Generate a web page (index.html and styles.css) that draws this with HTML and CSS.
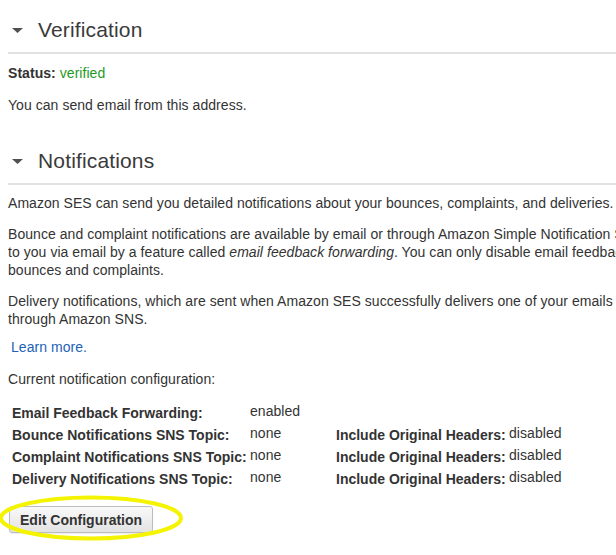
FILE: index.html
```html
<!DOCTYPE html>
<html>
<head>
<meta charset="utf-8">
<link rel="stylesheet" href="styles.css">
</head>
<body>
<div class="page">
  <div class="section-head">
    <svg class="caret" width="11" height="5" viewBox="0 0 11 5"><polygon points="0,0 11,0 5.5,5" fill="#505050"/></svg>
    <span class="section-title">Verification</span>
  </div>
  <p class="status"><b>Status:</b> <span class="ok">verified</span></p>
  <p class="p-send">You can send email from this address.</p>

  <div class="section-head section-head-2">
    <svg class="caret" width="11" height="5" viewBox="0 0 11 5"><polygon points="0,0 11,0 5.5,5" fill="#505050"/></svg>
    <span class="section-title">Notifications</span>
  </div>
  <p class="p-first">Amazon SES can send you detailed notifications about your bounces, complaints, and deliveries.</p>
  <p>Bounce and complaint notifications are available by email or through Amazon Simple Notification Service (Amazon SNS). By default, bounce and complaint notifications are sent<br>to you via email by a feature called <i>email feedback forwarding</i>. You can only disable email feedback forwarding when you have specified Amazon SNS topics for both<br>bounces and complaints.</p>
  <p>Delivery notifications, which are sent when Amazon SES successfully delivers one of your emails to a recipient's mail server, are only available<br>through Amazon SNS.</p>
  <p class="learn"><a href="#">Learn more.</a></p>
  <p class="current">Current notification configuration:</p>

  <div class="config">
    <div class="lbl">Email Feedback Forwarding:</div>
    <div class="val">enabled</div>
    <div></div>
    <div></div>

    <div class="lbl">Bounce Notifications SNS Topic:</div>
    <div class="val">none</div>
    <div class="lbl">Include Original Headers:</div>
    <div class="val">disabled</div>

    <div class="lbl">Complaint Notifications SNS Topic:</div>
    <div class="val">none</div>
    <div class="lbl">Include Original Headers:</div>
    <div class="val">disabled</div>

    <div class="lbl">Delivery Notifications SNS Topic:</div>
    <div class="val">none</div>
    <div class="lbl">Include Original Headers:</div>
    <div class="val">disabled</div>
  </div>

  <div class="btn-wrap">
    <button class="btn">Edit Configuration</button>
    <svg class="highlight" width="200" height="64" viewBox="0 0 200 64"><ellipse cx="91" cy="31" rx="90" ry="20.5" fill="none" stroke="#f4f400" stroke-width="4"/></svg>
  </div>
</div>
</body>
</html>
```

FILE: styles.css
```css
html {
  overflow: hidden;
  background: #fff;
}

body {
  margin: 0;
  padding: 0;
  font-family: "Liberation Sans", Arial, sans-serif;
  font-size: 14px;
  line-height: 18px;
  letter-spacing: 0.05px;
  color: #333;
}

.page {
  width: 1100px;
  padding: 0 8px 40px 8px;
}

p {
  margin: 13px 0 0 0;
  white-space: nowrap;
}

.section-head {
  display: flex;
  align-items: center;
  margin-top: 17px;
  padding: 0 0 9px 4px;
  border-bottom: 2px solid #e2e2e2;
}

.section-head-2 {
  margin-top: 34px;
}

.caret {
  display: block;
  margin-right: 15px;
  margin-top: 1px;
}

.section-title {
  font-size: 21px;
  line-height: 26px;
  letter-spacing: 0.15px;
  color: #3a3a3a;
}

.status {
  margin-top: 10px;
}

.status b {
  color: #333;
}

.ok {
  color: #1f9a1f;
}

.p-send {
  margin-top: 14px;
}

.p-first {
  margin-top: 9px;
}

.learn {
  margin-top: 10px;
  padding-left: 3px;
}

.learn a {
  color: #1c63b7;
  text-decoration: none;
}

.current {
  margin-top: 14px;
}

.config {
  display: grid;
  grid-template-columns: 238px 86px 173px auto;
  row-gap: 2px;
  margin: 14px 0 0 4px;
}

.lbl {
  font-weight: bold;
  padding-top: 2px;
  letter-spacing: 0;
  white-space: nowrap;
  color: #333;
}

.val {
  white-space: nowrap;
}

.btn-wrap {
  position: relative;
  margin-top: 18px;
  padding-left: 1px;
}

.btn {
  font-family: "Liberation Sans", Arial, sans-serif;
  font-size: 14px;
  font-weight: bold;
  color: #333;
  height: 27px;
  padding: 0 10px;
  border: 1px solid #bdbdbd;
  border-radius: 3px;
  background: linear-gradient(#f9f9f9, #e3e3e3);
  box-shadow: 0 1px 1px rgba(0, 0, 0, 0.08);
}

.highlight {
  position: absolute;
  left: -8px;
  top: -19px;
  pointer-events: none;
}
```
